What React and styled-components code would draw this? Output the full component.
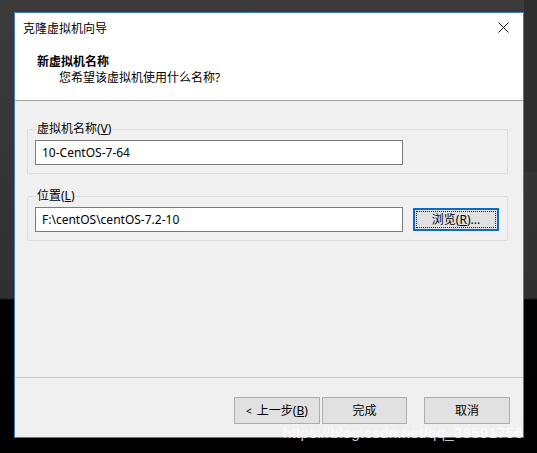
import styled, { createGlobalStyle } from 'styled-components'

const GlobalStyle = createGlobalStyle`
  html, body {
    margin: 0;
    padding: 0;
  }
  body {
    width: 537px;
    height: 453px;
    overflow: hidden;
    background:
      linear-gradient(#2f2f2f, #2f2f2f) right top / 13px 172px no-repeat,
      linear-gradient(#3b3b3b 0, #303030 298px, #030303 300px, #000 100%);
    font-family: "Segoe UI", "Noto Sans", "Noto Sans CJK SC", sans-serif;
    font-size: 12px;
    color: #000;
  }
`

const F = '"Segoe UI", "Noto Sans", "Noto Sans CJK SC", sans-serif'

export default function App () {
  return (
    <>
      <GlobalStyle />
      <Page>
        <Window>
          <TitleBar>
            <TitleText>克隆虚拟机向导</TitleText>
            <CloseButton aria-label="关闭">
              <svg width="11" height="11" viewBox="0 0 11 11">
                <path d="M0.5 0.5 L10.5 10.5 M10.5 0.5 L0.5 10.5" stroke="#111" strokeWidth="1" fill="none" />
              </svg>
            </CloseButton>
          </TitleBar>
          <Header>
            <HeaderTitle>新虚拟机名称</HeaderTitle>
            <HeaderSub>您希望该虚拟机使用什么名称?</HeaderSub>
          </Header>
          <Body>
            <Group>
              <Legend>虚拟机名称(<u>V</u>)</Legend>
              <Row>
                <TextBox defaultValue="10-CentOS-7-64" />
              </Row>
            </Group>
            <Group $gap={15}>
              <Legend>位置(<u>L</u>)</Legend>
              <Row>
                <TextBox defaultValue="F:\centOS\centOS-7.2-10" />
                <Button $focused $width={86}>
                  <FocusRing>浏览(<u>R</u>)...</FocusRing>
                </Button>
              </Row>
            </Group>
          </Body>
          <Footer>
            <Button $width={86}><Arrow>&lt;</Arrow>上一步(<u>B</u>)</Button>
            <Button $width={85}>完成</Button>
            <Button $width={86} $spaced>取消</Button>
          </Footer>
        </Window>
        <Watermark>https://blog.csdn.net/qq_38591756</Watermark>
      </Page>
    </>
  )
}

const Page = styled.div`
  position: relative;
  padding: 12px 13px 0 14px;
  height: 453px;
  box-sizing: border-box;
`

const Window = styled.div`
  width: 510px;
  height: 426px;
  box-sizing: border-box;
  border: 1px solid #3f7db4;
  background: #fff;
  display: flex;
  flex-direction: column;
`

const TitleBar = styled.div`
  height: 30px;
  display: flex;
  align-items: center;
  justify-content: space-between;
  padding-left: 8px;
  background: #fff;
`

const TitleText = styled.span`
  font-family: ${F};
  font-size: 12px;
  line-height: 16px;
  margin-top: 1px;
`

const CloseButton = styled.div`
  width: 32px;
  height: 30px;
  display: flex;
  align-items: center;
  justify-content: center;
  margin-right: 4px;
  margin-top: -2px;
`

const Header = styled.div`
  height: 58px;
  box-sizing: border-box;
  padding: 11px 0 0 22px;
  background: #fff;
  border-bottom: 1px solid #a0a0a0;
  display: flex;
  flex-direction: column;
`

const HeaderTitle = styled.div`
  font-weight: bold;
  line-height: 16px;
`

const HeaderSub = styled.div`
  line-height: 16px;
  padding-left: 22px;
`

const Body = styled.div`
  flex: 1;
  background: #f0f0f0;
  padding: 21px 15px 0 12px;
  display: flex;
  flex-direction: column;
`

const Group = styled.fieldset`
  margin: ${p => p.$gap || 0}px 0 0 0;
  padding: 4px 7px 8px 7px;
  border: 1px solid #dcdcdc;
  border-radius: 2px;
  min-width: 0;
`

const Legend = styled.legend`
  padding: 0 1px;
  margin-left: 1px;
  line-height: 14px;
  font-size: 12px;
  color: #000;
`

const Row = styled.div`
  display: flex;
  align-items: center;
  gap: 10px;
`

const TextBox = styled.input`
  width: 368px;
  height: 25px;
  box-sizing: border-box;
  border: 1px solid #7a7a7a;
  background: #fff;
  padding: 0 6px;
  font-family: ${F};
  font-size: 12px;
  color: #000;
  outline: none;
`

const Button = styled.div`
  width: ${p => p.$width}px;
  height: ${p => (p.$focused ? 23 : 27)}px;
  box-sizing: border-box;
  margin-left: ${p => (p.$spaced ? 15 : 0)}px;
  background: #e1e1e1;
  border: ${p => (p.$focused ? '2px solid #0c6cc4' : '1px solid #adadad')};
  display: flex;
  align-items: center;
  justify-content: center;
  font-size: 12px;
  line-height: 16px;
  white-space: nowrap;
  padding: ${p => (p.$focused ? '1px' : '0')};
`

const Arrow = styled.span`
  font-size: 10px;
  margin-right: 5px;
`

const FocusRing = styled.span`
  flex: 1;
  align-self: stretch;
  display: flex;
  align-items: center;
  justify-content: center;
  border: 1px dotted #222;
`

const Footer = styled.div`
  height: 60px;
  box-sizing: border-box;
  border-top: 1px solid #c8c8c8;
  background: #f0f0f0;
  display: flex;
  justify-content: flex-end;
  align-items: flex-start;
  gap: 2px;
  padding: 19px 13px 0 0;
`

const Watermark = styled.div`
  position: absolute;
  left: 283px;
  top: 424px;
  font-family: "Liberation Sans", Arial, sans-serif;
  font-size: 15px;
  line-height: 18px;
  letter-spacing: 0.3px;
  color: rgba(255, 255, 255, 0.78);
  white-space: nowrap;
`
